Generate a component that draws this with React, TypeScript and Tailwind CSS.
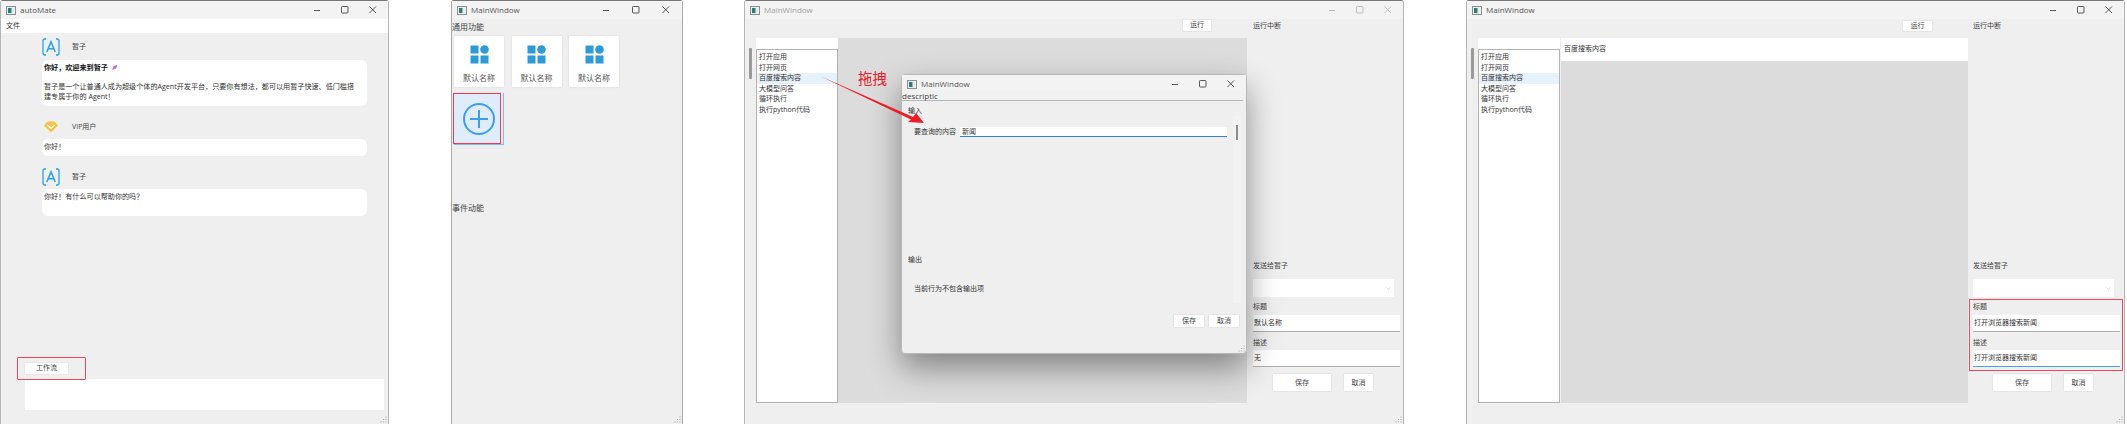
// App.tsx
import React from 'react';
import { ChevronDown } from 'lucide-react';

const actions = ['打开应用', '打开网页', '百度搜索内容', '大模型问答', '循环执行', '执行python代码'];

const WinIcon = () => (
  <svg width="10" height="9" viewBox="0 0 10 9" className="shrink-0">
    <rect x="0.5" y="0.5" width="9" height="8" fill="#e8eeee" stroke="#8a8f90" />
    <rect x="2" y="2" width="3.5" height="5" fill="#2f7d78" />
  </svg>
);

const Controls = ({ faded, gap = 'gap-[18px]', pr = 'pr-[10px]' }: { faded?: boolean; gap?: string; pr?: string }) => {
  const color = faded ? '#b5b5b5' : '#444444';
  return (
    <div className={`ml-auto flex items-center ${gap} ${pr}`}>
      <svg width="10" height="10" viewBox="0 0 10 10"><path d="M2 5.5h6" stroke={color} strokeWidth="0.9" /></svg>
      <svg width="10" height="10" viewBox="0 0 10 10"><rect x="1.5" y="1.5" width="6.5" height="6.5" rx="0.8" fill="none" stroke={color} strokeWidth="0.9" /></svg>
      <svg width="10" height="10" viewBox="0 0 10 10"><path d="M1.5 1.5l6.5 6.5M8 1.5L1.5 8" stroke={color} strokeWidth="0.9" /></svg>
    </div>
  );
};

const TitleBar = ({ title, faded, gap, pr }: { title: string; faded?: boolean; gap?: string; pr?: string }) => (
  <div className="flex h-[18px] shrink-0 items-center bg-[#f3f3f3] pl-[5px]">
    <WinIcon />
    <span className={`ml-[4px] text-[8px] leading-none ${faded ? 'text-[#a0a0a0]' : 'text-[#555555]'}`}>{title}</span>
    <Controls faded={faded} gap={gap} pr={pr} />
  </div>
);

const Grip = () => (
  <svg width="7" height="7" viewBox="0 0 7 7" className="absolute bottom-[1px] right-[1px]">
    <path d="M6 1v0M6 3.5v0M3.5 3.5v0M6 6v0M3.5 6v0M1 6v0" stroke="#b0b0b0" strokeWidth="1.1" strokeLinecap="square" />
  </svg>
);

const BotAvatar = () => (
  <svg width="18" height="18" viewBox="0 0 18 18" className="shrink-0">
    <g fill="none" stroke="#29a3e6" strokeWidth="1.3">
      <path d="M4 1H2.2L1 2.3v13.4L2.2 17H4" />
      <path d="M14 1h1.8L17 2.3v13.4L15.800 17H14" />
      <path d="M4.800 14L9 3.800 13.200 14M6.200 10.800h5.600" strokeWidth="1.600" />
    </g>
  </svg>
);

const VipAvatar = () => (
  <svg width="18" height="18" viewBox="0 0 18 18" className="shrink-0">
    <path d="M5.500 3.500h7L16 7.500 9 14.500 2 7.500z" fill="#f5c445" />
    <path d="M5.500 7l3.500 3.500L12.500 7" fill="none" stroke="#ffffff" strokeWidth="1.200" />
  </svg>
);

const Sender = ({ name, vip }: { name: string; vip?: boolean }) => (
  <div className="flex h-[18px] items-center gap-[12px] text-[7px] text-[#444444]">
    {vip ? <VipAvatar /> : <BotAvatar />}
    <span>{name}</span>
  </div>
);

const ChatWindow = () => (
  <div className="relative flex h-full w-[389px] shrink-0 flex-col rounded-t-[3px] border-x border-t border-x-[#b5b5b5] border-t-[#777777] bg-[#efefef]">
    <TitleBar title="autoMate" />
    <div className="flex h-[14px] shrink-0 items-center bg-white pl-[5px] text-[7px] text-[#333333]">文件</div>
    <div className="flex flex-col pl-[41px] pr-[21px] pt-[5px] text-[7.100px] leading-[9.500px] text-[#333333]">
      <Sender name="暂子" />
      <div className="mt-[4px] h-[46px] rounded-[6px] bg-white pl-[2px] pt-[3px]">
        <p className="flex items-center gap-[3px] font-bold text-[#111111]">
          你好，欢迎来到暂子
          <svg width="7" height="7" viewBox="0 0 7 7">
            <path d="M1 6l1.500-4L6 1 5 4.500z" fill="#d56bc4" />
            <path d="M3.500 3.500L6 1 5.500 3z" fill="#4f8fe0" />
          </svg>
        </p>
        <p className="mt-[9.500px] whitespace-nowrap">
          暂子是一个让普通人成为超级个体的Agent开发平台，只要你有想法，都可以用暂子快速、低门槛搭
          <br />
          建专属于你的 Agent！
        </p>
      </div>
      <div className="mt-[12px]"><Sender name="VIP用户" vip /></div>
      <div className="mt-[3px] h-[17px] rounded-[6px] bg-white pl-[2px] pt-[3px]">你好！</div>
      <div className="mt-[12px]"><Sender name="暂子" /></div>
      <div className="mt-[3px] h-[27px] rounded-[6px] bg-white pl-[2px] pt-[3px]">你好！有什么可以帮助你的吗？</div>
    </div>
    <div className="mt-auto pb-[14px] pl-[24px] pr-[4px]">
      <div className="relative w-[43px]">
        <div className="flex h-[11px] items-center justify-center bg-white text-[7px] text-[#444444] shadow-[0_0_1px_#cccccc]">工作流</div>
        <div className="absolute -bottom-[6px] -left-[8px] -right-[18px] -top-[6px] rounded-[1px] border border-[#f0485a]" />
      </div>
      <div className="mt-[5px] h-[31px] bg-white" />
    </div>
    <Grip />
  </div>
);

const ToolIcon = () => (
  <svg width="19" height="19" viewBox="0 0 19 19">
    <g fill="#2e9ad6">
      <rect x="0.500" y="0.500" width="8" height="8" />
      <circle cx="14.500" cy="4.500" r="4.300" />
      <rect x="0.500" y="10.500" width="8" height="8" />
      <rect x="10.500" y="10.500" width="8" height="8" />
    </g>
  </svg>
);

const ToolCard = () => (
  <div className="flex h-[51px] flex-col items-center rounded-[1px] bg-white pt-[9px] shadow-[0_0_2px_#d0d0d0]">
    <ToolIcon />
    <span className="mt-[8px] text-[8px] leading-[12px] text-[#555555]">默认名称</span>
  </div>
);

const ToolsWindow = () => (
  <div className="relative ml-[62px] flex h-full w-[232px] shrink-0 flex-col rounded-t-[3px] border-x border-t border-x-[#a8a8a8] border-t-[#777777] bg-[#efefef]">
    <TitleBar title="MainWindow" gap="gap-[20px]" pr="pr-[11px]" />
    <div className="flex flex-col text-[8px] leading-[10px] text-[#444444]">
      <div className="mt-[3px]">通用功能</div>
      <div className="ml-[2px] mt-[4px] grid grid-cols-[repeat(3,50px)] gap-x-[7.500px] gap-y-[6px]">
        <ToolCard />
        <ToolCard />
        <ToolCard />
        <div className="relative flex h-[52px] items-center justify-center border-b border-r border-[#86bcec] bg-[#deecfb]">
          <svg width="34" height="34" viewBox="0 0 34 34">
            <circle cx="17" cy="17" r="15" fill="none" stroke="#3c9df0" strokeWidth="2" />
            <path d="M17 8v18M8 17h18" stroke="#3c9df0" strokeWidth="2" />
          </svg>
          <div className="absolute -left-[1px] bottom-0 right-[2px] top-0 border-[1.500px] border-[#ee3a4c]" />
        </div>
      </div>
      <div className="mt-[58px]">事件动能</div>
    </div>
    <Grip />
  </div>
);

const ActionList = ({ handleMl, listMl, listW }: { handleMl: string; listMl: string; listW: string }) => (
  <div className="flex">
    <div className={`mt-[10px] h-[31px] w-[3px] shrink-0 rounded-[1px] bg-[#9a9a9a] ${handleMl}`} />
    <div className={`flex flex-col ${listMl} ${listW}`}>
      <div className="h-[11px] shrink-0 bg-white" />
      <div className="flex h-[354px] flex-col border border-[#b4b4b4] bg-white pt-[2px] text-[7px] leading-[10.600px] text-[#333333]">
        {actions.map((a) => (
          <div key={a} className={`h-[10.600px] pl-[2px] ${a === '百度搜索内容' ? 'bg-[#e5f1fb]' : ''}`}>{a}</div>
        ))}
      </div>
    </div>
  </div>
);

const SmallBtn = ({ label, w }: { label: string; w: string }) => (
  <div className={`flex items-center justify-center bg-white text-[7px] text-[#444444] shadow-[0_0_1.500px_#c8c8c8] ${w}`}>{label}</div>
);

const TextField = ({ value, focus }: { value: string; focus?: boolean }) => (
  <div className={`flex h-[17px] w-[147px] items-center bg-white pl-[1px] text-[7px] text-[#333333] border-b ${focus ? 'border-[#4aa0e0]' : 'border-[#b0b0b0]'}`}>{value}</div>
);

const SidePanel = ({ title, desc, focus, boxed, pl }: { title: string; desc: string; focus?: boolean; boxed?: boolean; pl: string }) => (
  <div className={`flex flex-col text-[7px] leading-[10px] text-[#444444] ${pl}`}>
    <div className="mt-[2px]">运行中断</div>
    <div className="mt-[230px]">发送给暂子</div>
    <div className="mt-[8px] flex h-[18px] w-[141px] items-center justify-end bg-white pr-[2px]">
      <ChevronDown size={7} strokeWidth={1} color="#888888" />
    </div>
    <div className="relative mt-[5px]">
      <div>标题</div>
      <div className="mt-[3px]"><TextField value={title} /></div>
      <div className="mt-[6px]">描述</div>
      <div className="mt-[2px]"><TextField value={desc} focus={focus} /></div>
      {boxed && <div className="absolute -bottom-[4px] -left-[4px] -right-[3px] -top-[3px] border border-[#ee4a5a]" />}
    </div>
    <div className="ml-[20px] mt-[7px] flex h-[17px] gap-[13px]">
      <SmallBtn label="保存" w="w-[58px]" />
      <SmallBtn label="取消" w="w-[29px]" />
    </div>
  </div>
);

const ParamModal = () => (
  <div className="absolute left-[63px] top-[36px] z-10 flex h-[280px] w-[346px] flex-col rounded-[4px] border border-[#b8b8b8] bg-[#efefef] shadow-[0_14px_32px_rgba(0,0,0,0.4)]">
    <TitleBar title="MainWindow" />
    <div className="-mt-[2px] mr-[3px] h-[10px] shrink-0 border-b border-[#b8b8b8] bg-[#f1f1f1] text-[8px] leading-[9px] text-[#444444]">descriptic</div>
    <div className="relative flex flex-1 flex-col text-[7px] leading-[10px] text-[#333333]">
      <div className="ml-[6px] mt-[5px]">输入</div>
      <div className="ml-[12px] mt-[11px] flex items-center">
        <span className="w-[45px] shrink-0">要查询的内容</span>
        <div className="ml-[1px] flex h-[10px] w-[267px] items-center border-b border-[#2f86d0] bg-white pl-[2px]">新闻</div>
      </div>
      <div className="ml-[6px] mt-[118px]">输出</div>
      <div className="ml-[12px] mt-[19px]">当前行为不包含输出项</div>
      <div className="ml-[272px] mt-[21px] flex h-[12px] gap-[5px]">
        <SmallBtn label="保存" w="w-[30px]" />
        <SmallBtn label="取消" w="w-[30px]" />
      </div>
      <div className="absolute left-[331px] top-[15px] h-[187px] w-[8px] bg-[#f2f2f2]">
        <div className="ml-[3px] mt-[9px] h-[15px] w-[2px] bg-[#8f8f8f]" />
      </div>
    </div>
    <Grip />
  </div>
);

const FlowWindow = () => (
  <div className="relative ml-[61px] flex h-full w-[660px] shrink-0 flex-col overflow-hidden rounded-t-[3px] border-x border-t border-x-[#b5b5b5] border-t-[#777777] bg-[#efefef]">
    <TitleBar title="MainWindow" faded />
    <div className="flex">
      <div className="w-[93px] shrink-0 pt-[19px]">
        <ActionList handleMl="ml-[4px]" listMl="ml-[4px]" listW="w-[82px]" />
      </div>
      <div className="w-[409px] shrink-0">
        <div className="flex h-[19px] justify-end pr-[36px] pt-[1px]">
          <SmallBtn label="运行" w="h-[11px] w-[28px]" />
        </div>
        <div className="relative h-[365px] bg-[#dcdcdc]">
          <ParamModal />
        </div>
      </div>
      <SidePanel title="默认名称" desc="无" pl="pl-[6px]" />
    </div>
    <div className="absolute left-[113px] top-[70px] z-20 text-[14.500px] leading-[15px] text-[#e8202a]">拖拽</div>
    <svg width="200" height="140" viewBox="0 0 200 140" className="absolute left-0 top-0 z-20">
      <polygon points="75,75 168,116 171,112 179,122 163,121 166,118.500" fill="#ee1c25" />
    </svg>
    <Grip />
  </div>
);

const ResultWindow = () => (
  <div className="relative ml-[62px] flex h-full w-[659px] shrink-0 flex-col rounded-t-[3px] border-x border-t border-x-[#b5b5b5] border-t-[#777777] bg-[#efefef]">
    <TitleBar title="MainWindow" />
    <div className="flex">
      <div className="w-[94px] shrink-0 pt-[19px]">
        <ActionList handleMl="ml-[4px]" listMl="ml-[4px]" listW="w-[82px]" />
      </div>
      <div className="w-[407px] shrink-0">
        <div className="flex h-[19px] justify-end pr-[36px] pt-[2px]">
          <SmallBtn label="运行" w="h-[10px] w-[29px]" />
        </div>
        <div className="h-[365px] bg-[#dcdcdc]">
          <div className="flex h-[23px] items-center bg-white pl-[3px] text-[7px] text-[#333333]">百度搜索内容</div>
        </div>
      </div>
      <SidePanel title="打开浏览器搜索新闻" desc="打开浏览器搜索新闻" focus boxed pl="pl-[5px]" />
    </div>
    <Grip />
  </div>
);

export default function App() {
  return (
    <div className="flex h-[424px] w-[2127px] overflow-hidden bg-white font-['Open_Sans','Noto_Sans_CJK_SC',sans-serif]">
      <ChatWindow />
      <ToolsWindow />
      <FlowWindow />
      <ResultWindow />
    </div>
  );
}
